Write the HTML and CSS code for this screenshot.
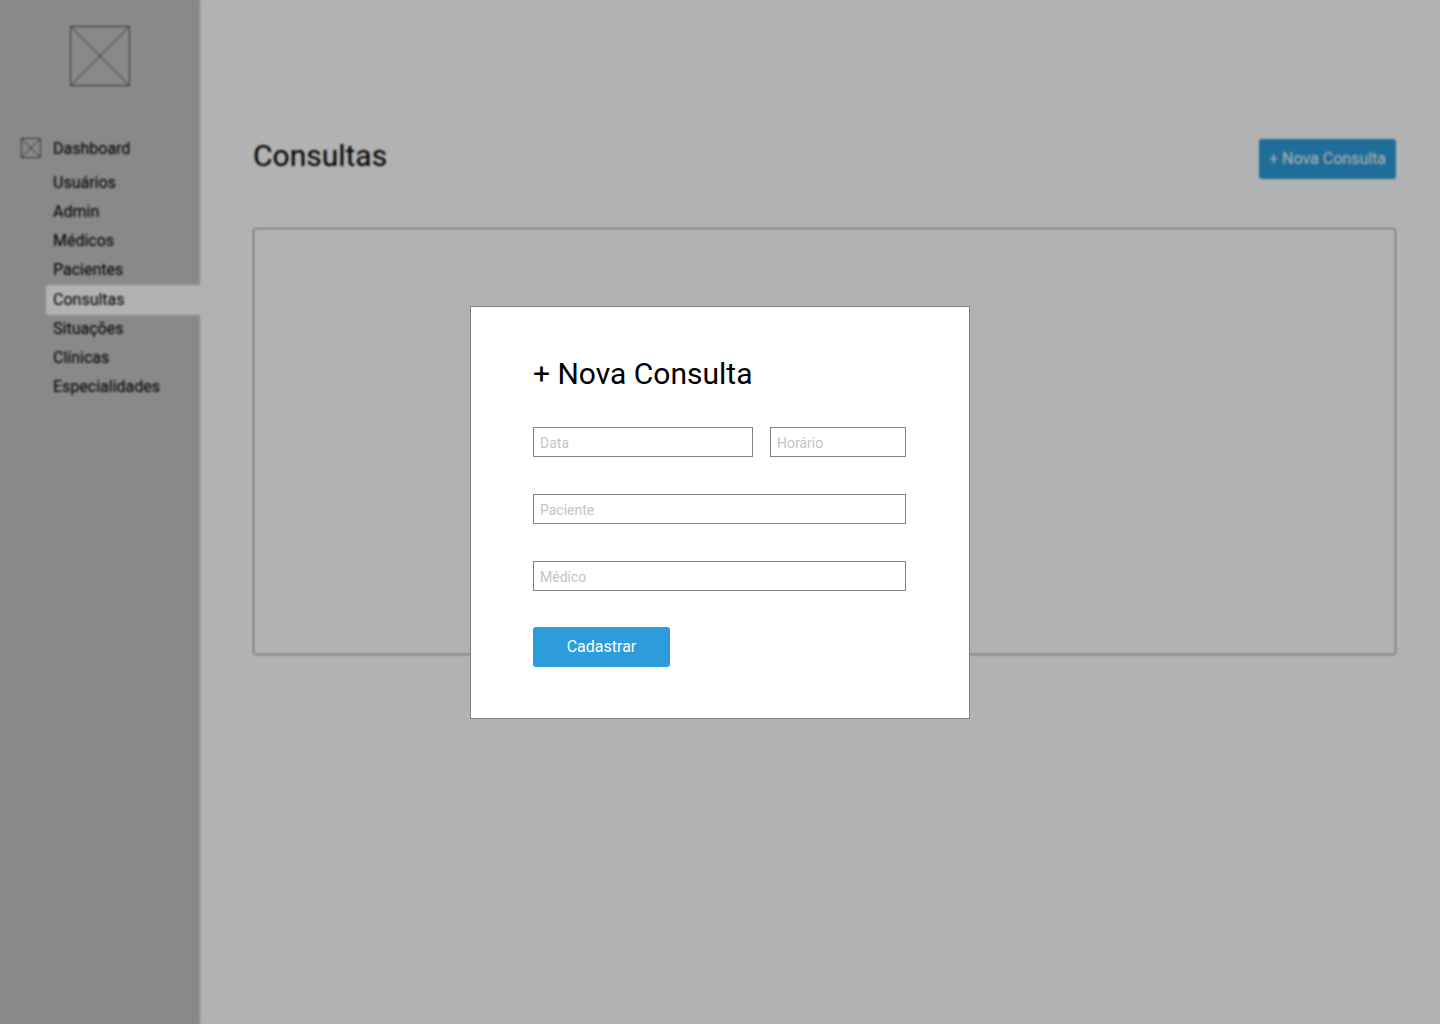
FILE: index.html
```html
<!DOCTYPE html>
<html lang="pt-BR">
<head>
<meta charset="utf-8">
<title>Consultas</title>
<link rel="stylesheet" href="styles.css">
</head>
<body>
<div class="app">
  <aside class="sidebar">
    <svg class="logo" viewBox="0 0 62 62"><path d="M1.5 1.5H60.5V60.5H1.5ZM1.5 1.5L60.5 60.5M60.5 1.5L1.5 60.5"/></svg>
    <nav class="menu">
      <a class="menu-head"><svg class="menu-icon" viewBox="0 0 22 22"><path d="M1.5 1.5H20.5V20.5H1.5ZM1.5 1.5L20.5 20.5M20.5 1.5L1.5 20.5"/></svg><span>Dashboard</span></a>
      <a class="item">Usuários</a>
      <a class="item">Admin</a>
      <a class="item">Médicos</a>
      <a class="item">Pacientes</a>
      <a class="item active">Consultas</a>
      <a class="item">Situações</a>
      <a class="item">Clínicas</a>
      <a class="item">Especialidades</a>
    </nav>
  </aside>
  <main class="content">
    <header class="page-head">
      <h1 class="title">Consultas</h1>
      <button class="button">+ Nova Consulta</button>
    </header>
    <section class="panel"></section>
  </main>
</div>
<div class="overlay">
  <form class="modal">
    <h2 class="title">+ Nova Consulta</h2>
    <div class="fields">
      <input class="field" placeholder="Data">
      <input class="field" placeholder="Horário">
      <input class="field wide" placeholder="Paciente">
      <input class="field wide" placeholder="Médico">
    </div>
    <button class="button" type="button">Cadastrar</button>
  </form>
</div>
</body>
</html>
```
FILE: styles.css
```css
* { box-sizing: border-box; }
body { margin: 0; overflow: hidden; background: #fff; color: #000; font-family: Roboto, sans-serif; font-size: 16px; }

.app { display: flex; height: 1024px; }
.sidebar { width: 200px; padding-top: 25px; background: #c4c4c4; }
.logo, .menu-icon { fill: none; stroke: #4f4f4f; stroke-width: 1; }
.logo { display: block; width: 62px; height: 62px; margin: 0 auto; }
.menu { display: flex; flex-direction: column; margin-top: 46px; line-height: 29px; }
.menu-head { display: flex; align-items: center; gap: 11px; height: 30px; margin-bottom: 5px; padding-left: 20px; }
.menu-icon { width: 22px; height: 22px; }
.item { height: 29px; margin-left: 46px; padding-left: 7px; }
.item.active { height: 30px; line-height: 30px; margin-top: 1px; margin-bottom: -1px; border-radius: 2px 0 0 2px; background: #fff; }

.content { flex: 1; padding: 138px 44px 0 53px; }
.page-head { display: flex; justify-content: space-between; align-items: flex-start; height: 90px; }
.title { margin: 0; font-size: 30px; line-height: 36px; font-weight: 400; }
.page-head .button { margin-top: 1px; padding-bottom: 2px; }
.button { width: 137px; height: 40px; padding: 0; border: 0; border-radius: 3px; background: #2d9cdb; color: #fff; font: 16px Roboto, sans-serif; white-space: nowrap; }
.panel { height: 427px; border: 1.5px solid #828282; border-radius: 3px; }

.overlay { position: fixed; inset: 0; display: flex; align-items: center; justify-content: center; background: rgba(0, 0, 0, .3); backdrop-filter: blur(1px); }
.modal { width: 500px; height: 413px; padding: 49px 63px 0 62px; border: 1px solid #828282; background: #fff; }
.fields { display: grid; grid-template-columns: 220px 136px; gap: 37px 17px; margin: 35px 0 36px; }
.field { width: 100%; height: 30px; padding: 2px 6px 0; border: 1px solid #828282; border-radius: 0; background: #fff; font: 14px Roboto, sans-serif; }
.field::placeholder { color: #c4c4c4; opacity: 1; }
.wide { grid-column: 1 / -1; }
```
